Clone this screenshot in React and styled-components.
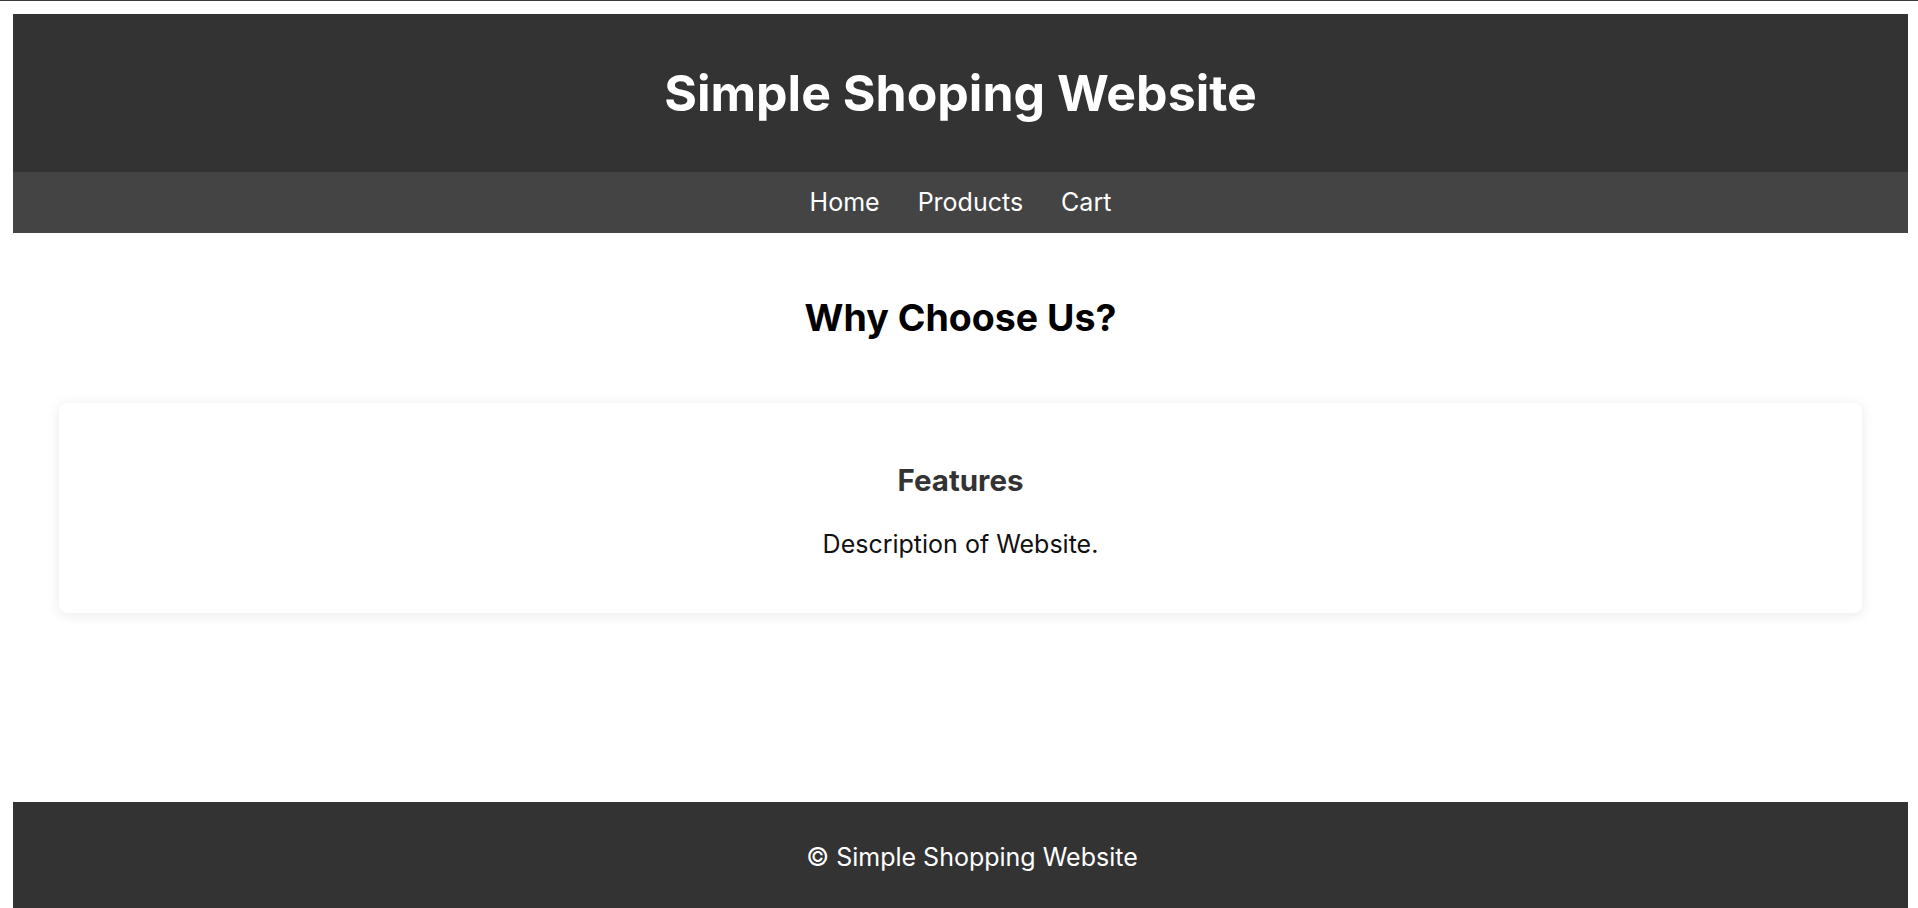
import React from "react";
import styled, { createGlobalStyle } from "styled-components";

const GlobalStyle = createGlobalStyle`
  html {
    border-top: 1px solid #3a3a3a;
    overflow-x: hidden;
    overflow-y: hidden;
  }
  body {
    margin: 13px 10px 0 13px;
    font-family: Inter, "Noto Sans", sans-serif;
    font-size: 25px;
    background: #fff;
  }
`;

const Page = styled.div`
  display: block;
`;

const Header = styled.header`
  background: #333;
  padding: 49px 20px 49px;
  text-align: center;
`;

const Title = styled.h1`
  margin: 0;
  color: #fff;
  font-size: 50px;
  font-weight: 700;
  line-height: 60px;
`;

const Nav = styled.nav`
  background: #444;
  display: flex;
  justify-content: center;
  gap: 38px;
  padding: 15px 0 16px;
`;

const NavLink = styled.a`
  color: #fff;
  font-size: 25px;
  line-height: 30px;
  text-decoration: none;
  cursor: pointer;
`;

const Main = styled.main`
  padding: 0 46px 189px;
`;

const SectionTitle = styled.h2`
  margin: 62px 0 63px;
  text-align: center;
  font-size: 37.5px;
  line-height: 45px;
  font-weight: 700;
  color: #000;
`;

const Card = styled.div`
  background: #fff;
  border-radius: 8px;
  box-shadow: 0 2px 14px rgba(0, 0, 0, 0.09);
  padding: 60px 20px 54px;
  text-align: center;
`;

const CardTitle = styled.h3`
  margin: 0 0 31px;
  font-size: 29.5px;
  line-height: 35px;
  font-weight: 700;
  color: #333;
`;

const CardText = styled.p`
  margin: 0;
  font-size: 25px;
  line-height: 30px;
  color: #111;
`;

const Footer = styled.footer`
  box-sizing: border-box;
  width: 100vw;
  background: #333;
  padding: 40px 0;
  text-align: center;
  color: #fff;
  font-size: 25px;
  line-height: 30px;
`;

const links = ["Home", "Products", "Cart"];

const App = () => (
  <Page>
    <GlobalStyle />
    <Header>
      <Title>Simple Shoping Website</Title>
    </Header>
    <Nav>
      {links.map((l) => (
        <NavLink key={l}>{l}</NavLink>
      ))}
    </Nav>
    <Main>
      <SectionTitle>Why Choose Us?</SectionTitle>
      <Card>
        <CardTitle>Features</CardTitle>
        <CardText>Description of Website.</CardText>
      </Card>
    </Main>
    <Footer>© Simple Shopping Website</Footer>
  </Page>
);

export default App;
